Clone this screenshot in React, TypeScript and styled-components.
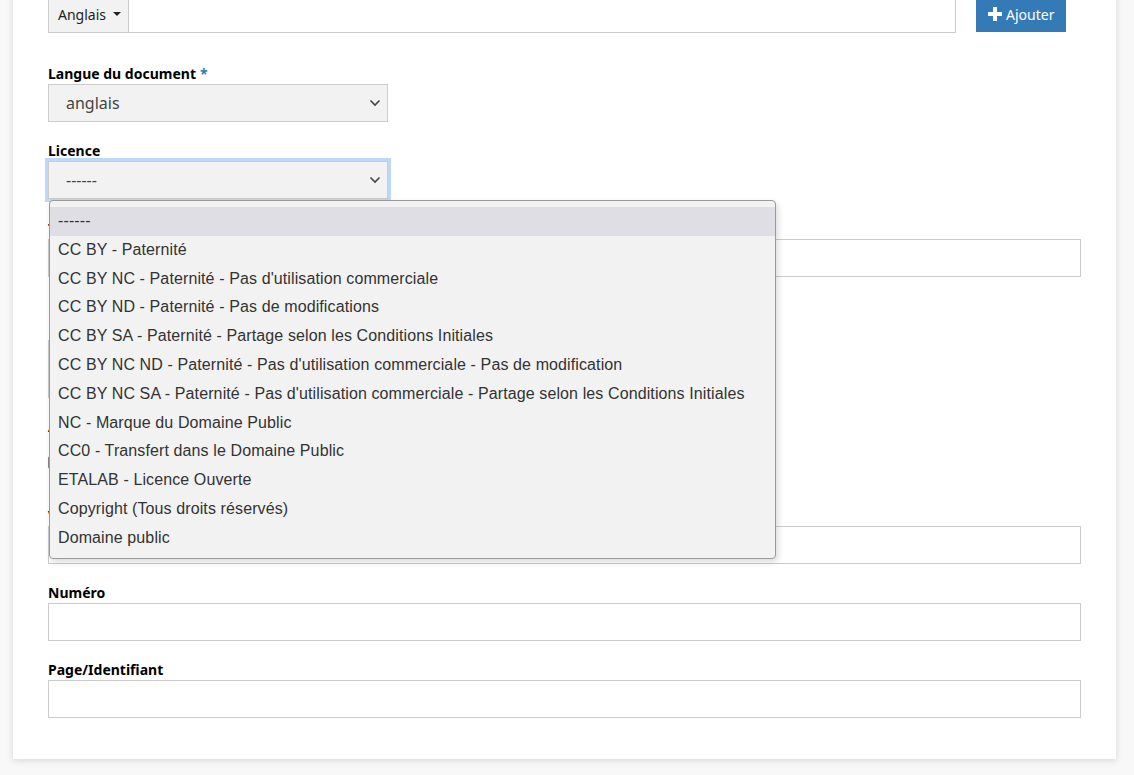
import React from "react";
import styled, { createGlobalStyle } from "styled-components";

const GlobalStyle = createGlobalStyle`
  html, body {
    margin: 0;
    padding: 0;
    background: #f8f8f8;
    font-family: "Noto Sans", "Open Sans", sans-serif;
    overflow: hidden;
  }
`;

const Page = styled.div`
  padding: 0 18px 16px 13px;
`;

const Card = styled.div`
  margin-top: -40px;
  padding: 35px 35px 41px;
  background: #fff;
  box-shadow: 0 2px 7px rgba(0, 0, 0, 0.13);
`;

const TopRow = styled.div`
  display: flex;
  align-items: flex-start;
  margin-bottom: 30px;
`;

const InputGroup = styled.div`
  display: flex;
  width: 908px;
  height: 38px;
`;

const LangButton = styled.div`
  display: flex;
  align-items: center;
  gap: 7px;
  box-sizing: border-box;
  width: 80px;
  padding-left: 9px;
  background: #f2f2f2;
  border: 1px solid #ccc;
  border-right: none;
  font-size: 14px;
  color: #222;
`;

const Caret = styled.span`
  width: 0;
  height: 0;
  border-left: 4px solid transparent;
  border-right: 4px solid transparent;
  border-top: 4px solid #222;
`;

const GroupInput = styled.div`
  flex: 1;
  border: 1px solid #ccc;
  background: #fff;
`;

const AddButton = styled.div`
  display: flex;
  align-items: center;
  gap: 4px;
  box-sizing: border-box;
  height: 37px;
  width: 90px;
  margin-left: 20px;
  padding: 1px 0 0 12px;
  background: #337ab7;
  color: #fff;
  font-size: 14px;
`;

const Field = styled.div<{ $mb?: number }>`
  position: relative;
  margin-bottom: ${(p) => (p.$mb ?? 18)}px;
`;

const Label = styled.div`
  box-sizing: border-box;
  height: 20px;
  padding-top: 2px;
  line-height: 18px;
  margin-bottom: 1px;
  font-size: 14px;
  font-weight: 700;
  color: #000;
`;

const Required = styled.span`
  color: #337ab7;
  margin-left: 4px;
`;

const Hint = styled.div`
  height: 24px;
  padding-left: 20px;
  font-size: 13px;
  color: #666;
`;

const TextInput = styled.div<{ $h?: number; $w?: number }>`
  box-sizing: border-box;
  height: ${(p) => p.$h ?? 38}px;
  width: ${(p) => (p.$w ? `${p.$w}px` : "auto")};
  border: 1px solid #ccc;
  background: #fff;
`;

const Select = styled.div<{ $focus?: boolean }>`
  display: flex;
  align-items: center;
  justify-content: space-between;
  box-sizing: border-box;
  width: 340px;
  height: 38px;
  padding: 0 6px 0 17px;
  background: #f2f2f2;
  border: 1px solid #ccc;
  font-size: 16px;
  color: #444;
  box-shadow: ${(p) => (p.$focus ? "0 0 0 3px #bcdaf8" : "none")};
`;

const CheckRow = styled.div`
  display: flex;
  align-items: center;
  height: 50px;
`;

const Checkbox = styled.div`
  width: 13px;
  height: 13px;
  border: 1px solid #888;
  border-radius: 2px;
  box-sizing: border-box;
`;

const Dropdown = styled.div`
  position: absolute;
  top: 60px;
  left: 1px;
  width: 727px;
  box-sizing: border-box;
  padding: 6px 0 5px;
  background: #f2f2f2;
  border: 1px solid #9a9a9a;
  border-radius: 4px;
  box-shadow: 2px 3px 6px rgba(0, 0, 0, 0.15);
  z-index: 10;
`;

const Option = styled.div<{ $active?: boolean }>`
  height: 28.8px;
  line-height: 28.8px;
  padding-left: 8px;
  font-family: "Liberation Sans", Arial, sans-serif;
  font-size: 16px;
  letter-spacing: 0.11px;
  color: #333;
  background: ${(p) => (p.$active ? "#dfdee5" : "transparent")};
  white-space: nowrap;
`;

const licences = [
  "------",
  "CC BY - Paternité",
  "CC BY NC - Paternité - Pas d'utilisation commerciale",
  "CC BY ND - Paternité - Pas de modifications",
  "CC BY SA - Paternité - Partage selon les Conditions Initiales",
  "CC BY NC ND - Paternité - Pas d'utilisation commerciale - Pas de modification",
  "CC BY NC SA - Paternité - Pas d'utilisation commerciale - Partage selon les Conditions Initiales",
  "NC - Marque du Domaine Public",
  "CC0 - Transfert dans le Domaine Public",
  "ETALAB - Licence Ouverte",
  "Copyright (Tous droits réservés)",
  "Domaine public",
];

function Chevron() {
  return (
    <svg width="12" height="8" viewBox="0 0 12 8">
      <polyline
        points="1.5,1.5 6,6 10.5,1.5"
        fill="none"
        stroke="#444"
        strokeWidth="1.6"
      />
    </svg>
  );
}

function PlusIcon() {
  return (
    <svg width="14" height="14" viewBox="0 0 14 14">
      <rect x="5" y="0" width="4" height="14" fill="#fff" />
      <rect x="0" y="5" width="14" height="4" fill="#fff" />
    </svg>
  );
}

export default function App() {
  return (
    <Page>
      <GlobalStyle />
      <Card>
        <TopRow>
          <InputGroup>
            <LangButton>
              Anglais <Caret />
            </LangButton>
            <GroupInput />
          </InputGroup>
          <AddButton>
            <PlusIcon />
            Ajouter
          </AddButton>
        </TopRow>

        <Field>
          <Label>
            Langue du document<Required>*</Required>
          </Label>
          <Select>
            anglais
            <Chevron />
          </Select>
        </Field>

        <Field $mb={19}>
          <Label>Licence</Label>
          <Select $focus>
            ------
            <Chevron />
          </Select>
          <Dropdown>
            {licences.map((l, i) => (
              <Option key={l} $active={i === 0}>
                {l}
              </Option>
            ))}
          </Dropdown>
        </Field>

        <Field>
          <Label>Titre</Label>
          <TextInput />
        </Field>

        <Field>
          <Label> </Label>
          <Hint>Date de publication</Hint>
          <TextInput $h={58} $w={340} />
        </Field>

        <Field>
          <Label>Accès ouvert</Label>
          <CheckRow>
            <Checkbox />
          </CheckRow>
        </Field>

        <Field>
          <Label>Volume</Label>
          <TextInput />
        </Field>

        <Field>
          <Label>Numéro</Label>
          <TextInput />
        </Field>

        <Field $mb={0}>
          <Label>Page/Identifiant</Label>
          <TextInput />
        </Field>
      </Card>
    </Page>
  );
}
